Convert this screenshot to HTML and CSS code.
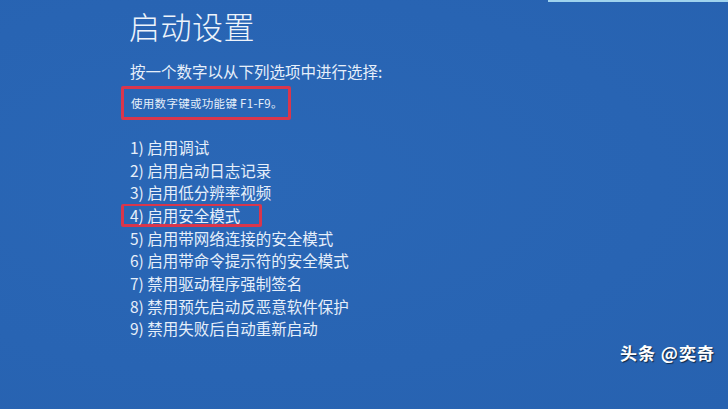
FILE: index.html
```html
<!DOCTYPE html>
<html lang="zh">
<head>
<meta charset="utf-8">
<link rel="stylesheet" href="styles.css">
</head>
<body>
<div class="screen">
  <div class="topbar"></div>
  <div class="content">
    <h1 class="title">启动设置</h1>
    <p class="subtitle">按一个数字以从下列选项中进行选择:</p>
    <div class="hint-box"><span class="hint">使用数字键或功能键 F1-F9。</span></div>
    <ul class="options">
      <li>1) 启用调试</li>
      <li>2) 启用启动日志记录</li>
      <li>3) 启用低分辨率视频</li>
      <li class="marked">4) 启用安全模式</li>
      <li>5) 启用带网络连接的安全模式</li>
      <li>6) 启用带命令提示符的安全模式</li>
      <li>7) 禁用驱动程序强制签名</li>
      <li>8) 禁用预先启动反恶意软件保护</li>
      <li>9) 禁用失败后自动重新启动</li>
    </ul>
  </div>
  <div class="watermark">头条 @奕奇</div>
</div>
</body>
</html>
```
FILE: styles.css
```css
html, body {
  margin: 0;
  padding: 0;
}
body {
  width: 728px;
  height: 409px;
  overflow: hidden;
  background: #2965b4;
  font-family: "Noto Sans CJK SC", "Noto Sans", sans-serif;
  color: #e6effa;
}
.screen {
  position: relative;
  width: 728px;
  height: 409px;
  background: radial-gradient(ellipse at 35% 45%, #2a67b6 0%, #2864b3 60%, #2762b0 100%);
}
.topbar {
  position: absolute;
  top: 0;
  left: 548px;
  width: 180px;
  height: 2px;
  background: #9fd3ee;
}
.content {
  padding: 4px 0 0 129px;
}
.title {
  margin: 0;
  font-size: 31px;
  font-weight: 300;
  line-height: 44px;
  letter-spacing: 0.5px;
  color: #eef4fb;
}
.subtitle {
  margin: 13px 0 0 1px;
  font-size: 15.5px;
  line-height: 20px;
}
.hint-box {
  box-sizing: border-box;
  margin: 5px 0 0 -8px;
  width: 170px;
  height: 34px;
  border: 3px solid #d9364c;
  border-radius: 2px;
  display: flex;
  align-items: center;
  padding-left: 7px;
}
.hint {
  font-size: 11.5px;
  line-height: 14px;
  letter-spacing: 0.3px;
}
.options {
  list-style: none;
  margin: 16px 0 0 1px;
  padding: 0;
  font-size: 15.5px;
  line-height: 22.6px;
}
.options li {
  height: 22.6px;
}
.options li.marked {
  box-sizing: border-box;
  margin-left: -9px;
  padding-left: 6px;
  width: 141px;
  height: 23px;
  line-height: 18px;
  border: 3px solid #d9364c;
  border-top-width: 2px;
  border-radius: 2px;
}
.watermark {
  position: absolute;
  right: 13px;
  bottom: 46px;
  font-size: 17px;
  font-weight: 700;
  letter-spacing: 1px;
  color: #ffffff;
  text-shadow: 1px 1px 1px rgba(0, 0, 0, 0.6);
  line-height: 20px;
}
```
